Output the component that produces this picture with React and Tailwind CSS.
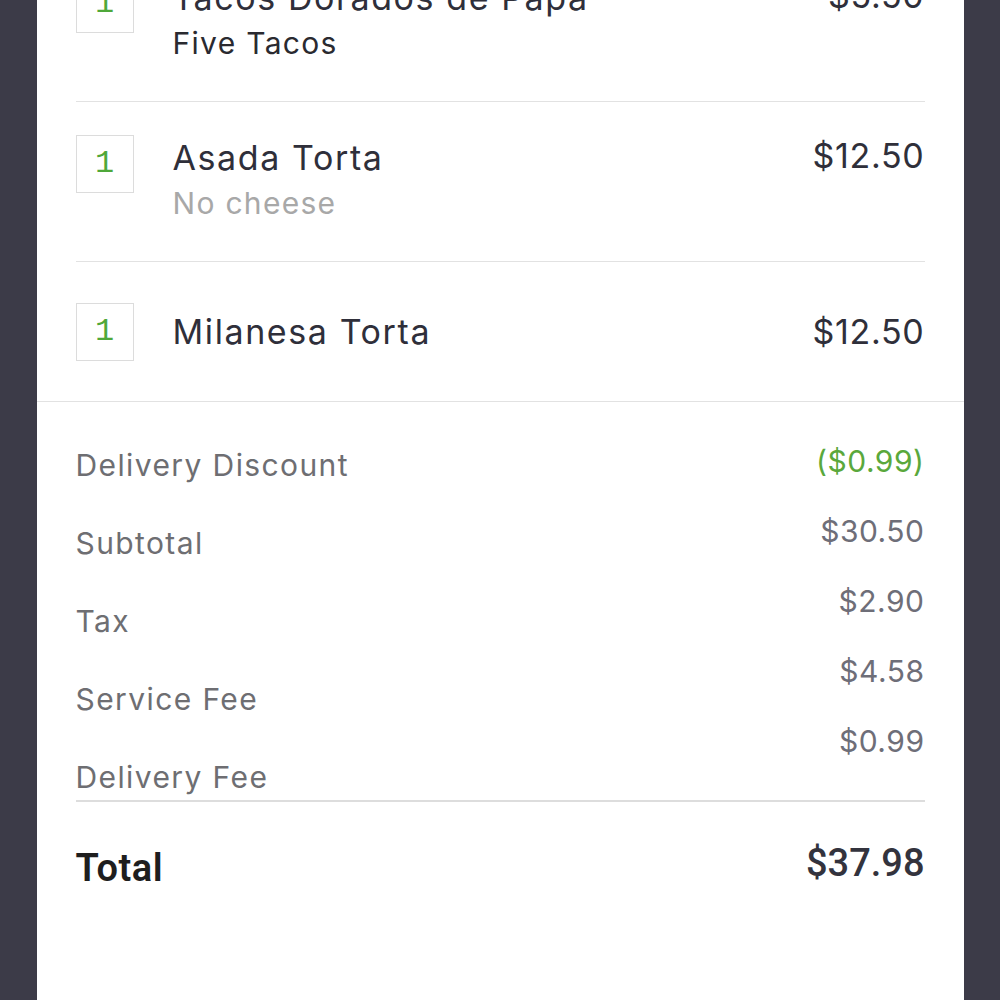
import React from 'react';

const items = [
    { qty: 1, name: 'Tacos Dorados de Papa', note: 'Five Tacos', noteDark: true, price: '$5.50' },
    { qty: 1, name: 'Asada Torta', note: 'No cheese', price: '$12.50' },
    { qty: 1, name: 'Milanesa Torta', price: '$12.50' },
];

const labels = ['Delivery Discount', 'Subtotal', 'Tax', 'Service Fee', 'Delivery Fee'];
const values = ['($0.99)', '$30.50', '$2.90', '$4.58', '$0.99'];

const QtyBox = ({ qty }) => (
    <div className="w-[58px] h-[58px] shrink-0 border border-[#dcdcdc] flex items-center justify-center text-[#4fa83a] text-[32px] font-['Liberation_Mono',monospace]">
        {qty}
    </div>
);

const ItemRow = ({ item, first, last }) => (
    <div
        className={`flex justify-between ${item.note ? 'items-start pt-[33px] pb-[36px]' : 'items-center pt-[41px] pb-[40px]'} ${last ? '' : 'border-b border-[#e2e2e2]'} ${first ? '-mt-[58px]' : ''}`}
    >
        <div className={`flex ${item.note ? 'items-start' : 'items-center'} gap-[39px]`}>
            <QtyBox qty={item.qty} />
            <div className="flex flex-col">
                <span className="text-[34px] leading-[46px] tracking-[1.6px] text-[#2f2f3a]">{item.name}</span>
                {item.note && (
                    <span className={`text-[30px] leading-[44px] tracking-[1.3px] ${item.noteDark ? 'text-[#2a2a30]' : 'text-[#a8a8a8]'}`}>
                        {item.note}
                    </span>
                )}
            </div>
        </div>
        <span className={`text-[34px] leading-[46px] tracking-[0.7px] text-[#2f2f3a] ${item.note ? '-mt-[2px]' : ''}`}>{item.price}</span>
    </div>
);

export default function App() {
    return (
        <div className="w-[1000px] h-[1000px] overflow-hidden bg-[#3c3b48] flex justify-center font-['Inter',sans-serif]">
            <div className="w-[927px] h-full bg-white flex flex-col">
                <div className="px-[39px]">
                    {items.map((item, i) => (
                        <ItemRow key={i} item={item} first={i === 0} last={i === items.length - 1} />
                    ))}
                </div>
                <div className="border-t border-[#e2e2e2] px-[39px] pt-[24px]">
                    <div className="h-[374px] flex justify-between">
                        <div className="flex flex-col text-[30px] tracking-[1.4px] text-[#6e6e72]">
                            {labels.map((l) => (
                                <span key={l} className="leading-[78px] h-[78px]">{l}</span>
                            ))}
                        </div>
                        <div className="flex flex-col items-end text-[30px] tracking-[0.5px] text-[#6e6e78]">
                            {values.map((v, i) => (
                                <span key={i} className={`leading-[70px] ${i === 0 ? 'text-[#5aa83c]' : ''}`}>{v}</span>
                            ))}
                        </div>
                    </div>
                    <div className="h-[2px] bg-[#dddddd]" />
                    <div className="flex justify-between pt-[44px]">
                        <span className="text-[38px] leading-[40px] font-semibold text-[#1e1e1e] font-['Roboto',sans-serif] tracking-[0.5px] mt-[2px]">Total</span>
                        <span className="text-[38px] leading-[40px] font-medium text-[#33333d] font-['Roboto',sans-serif] -mt-[3px]">$37.98</span>
                    </div>
                </div>
            </div>
        </div>
    );
}
